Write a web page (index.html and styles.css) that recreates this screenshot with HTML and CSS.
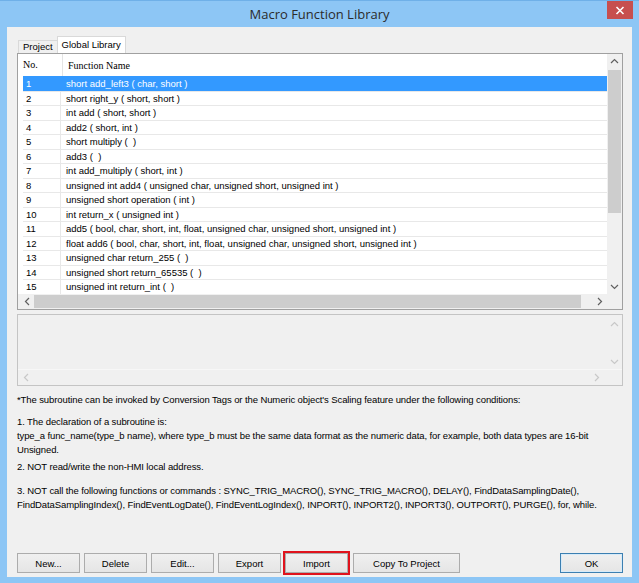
FILE: index.html
```html
<!DOCTYPE html>
<html lang="en">
<head>
  <meta charset="UTF-8" />
  <title>Macro Function Library</title>
  <link rel="stylesheet" href="styles.css">
</head>
<body>
  <div class="window">
    <div class="titlebar">
      <span class="title">Macro Function Library</span>
      <button class="close-btn">
        <svg width="10" height="9" viewBox="0 0 10 9"><path d="M1.5 1 L8.5 8 M8.5 1 L1.5 8" stroke="#fff" stroke-width="1.6" fill="none"/></svg>
      </button>
    </div>

    <div class="client">
      <div class="tabs">
        <div class="tab">Project</div>
        <div class="tab active">Global Library</div>
      </div>

      <div class="listview">
        <div class="lv-main">
          <div class="lv-body">
            <div class="lv-header">
              <div class="col-no">No.</div>
              <div class="col-name">Function Name</div>
            </div>
            <div class="lv-row selected"><div class="col-no">1</div><div class="col-name">short add_left3 ( char, short )</div></div>
            <div class="lv-row"><div class="col-no">2</div><div class="col-name">short right_y ( short, short )</div></div>
            <div class="lv-row"><div class="col-no">3</div><div class="col-name">int add ( short, short )</div></div>
            <div class="lv-row"><div class="col-no">4</div><div class="col-name">add2 ( short, int )</div></div>
            <div class="lv-row"><div class="col-no">5</div><div class="col-name">short multiply (&nbsp; )</div></div>
            <div class="lv-row"><div class="col-no">6</div><div class="col-name">add3 (&nbsp; )</div></div>
            <div class="lv-row"><div class="col-no">7</div><div class="col-name">int add_multiply ( short, int )</div></div>
            <div class="lv-row"><div class="col-no">8</div><div class="col-name">unsigned int add4 ( unsigned char, unsigned short, unsigned int )</div></div>
            <div class="lv-row"><div class="col-no">9</div><div class="col-name">unsigned short operation ( int )</div></div>
            <div class="lv-row"><div class="col-no">10</div><div class="col-name">int return_x ( unsigned int )</div></div>
            <div class="lv-row"><div class="col-no">11</div><div class="col-name">add5 ( bool, char, short, int, float, unsigned char, unsigned short, unsigned int )</div></div>
            <div class="lv-row"><div class="col-no">12</div><div class="col-name">float add6 ( bool, char, short, int, float, unsigned char, unsigned short, unsigned int )</div></div>
            <div class="lv-row"><div class="col-no">13</div><div class="col-name">unsigned char return_255 (&nbsp; )</div></div>
            <div class="lv-row"><div class="col-no">14</div><div class="col-name">unsigned short return_65535 (&nbsp; )</div></div>
            <div class="lv-row"><div class="col-no">15</div><div class="col-name">unsigned int return_int (&nbsp; )</div></div>
          </div>
          <div class="vscroll">
            <svg class="arrow" width="15" height="14" viewBox="0 0 15 14"><path d="M4 9 L7.5 5.5 L11 9" stroke="#606060" stroke-width="1.2" fill="none"/></svg>
            <div class="vthumb"></div>
            <div class="vspace"></div>
            <svg class="arrow" width="15" height="14" viewBox="0 0 15 14"><path d="M4 5 L7.5 8.5 L11 5" stroke="#606060" stroke-width="1.2" fill="none"/></svg>
          </div>
        </div>
        <div class="hscroll-row">
          <div class="hscroll">
            <svg class="arrow" width="14" height="15" viewBox="0 0 14 15"><path d="M9 4 L5.5 7.5 L9 11" stroke="#606060" stroke-width="1.2" fill="none"/></svg>
            <div class="hthumb"></div>
            <svg class="arrow" width="14" height="15" viewBox="0 0 14 15"><path d="M5 4 L8.5 7.5 L5 11" stroke="#606060" stroke-width="1.2" fill="none"/></svg>
          </div>
          <div class="corner"></div>
        </div>
      </div>

      <div class="descbox">
        <div class="desc-main">
          <div class="desc-text"></div>
          <div class="desc-vscroll">
            <svg width="15" height="14" viewBox="0 0 15 14"><path d="M4 9 L7.5 5.5 L11 9" stroke="#c8c8c8" stroke-width="1.2" fill="none"/></svg>
            <svg width="15" height="14" viewBox="0 0 15 14"><path d="M4 5 L7.5 8.5 L11 5" stroke="#c8c8c8" stroke-width="1.2" fill="none"/></svg>
          </div>
        </div>
        <div class="desc-hscroll">
          <svg width="14" height="15" viewBox="0 0 14 15"><path d="M9 4 L5.5 7.5 L9 11" stroke="#c8c8c8" stroke-width="1.2" fill="none"/></svg>
          <svg width="14" height="15" viewBox="0 0 14 15"><path d="M5 4 L8.5 7.5 L5 11" stroke="#c8c8c8" stroke-width="1.2" fill="none"/></svg>
        </div>
      </div>

      <div class="notes">
        <p class="intro">*The subroutine can be invoked by Conversion Tags or the Numeric object's Scaling feature under the following conditions:</p>
        <p class="rule-1">1. The declaration of a subroutine is:<br>type_a func_name(type_b name), where type_b must be the same data format as the numeric data, for example, both data types are 16-bit<br>Unsigned.</p>
        <p class="rule-2">2. NOT read/write the non-HMI local address.</p>
        <p>3. NOT call the following functions or commands : SYNC_TRIG_MACRO(), SYNC_TRIG_MACRO(), DELAY(), FindDataSamplingDate(),<br>FindDataSamplingIndex(), FindEventLogDate(), FindEventLogIndex(), INPORT(), INPORT2(), INPORT3(), OUTPORT(), PURGE(), for, while.</p>
      </div>

      <div class="buttons">
        <button class="btn">New...</button>
        <button class="btn">Delete</button>
        <button class="btn">Edit...</button>
        <button class="btn">Export</button>
        <button class="btn marked">Import</button>
        <button class="btn wide">Copy To Project</button>
        <button class="btn default">OK</button>
      </div>
    </div>
  </div>
</body>
</html>
```

FILE: styles.css
```css
body {
  margin: 0;
  padding: 0;
  background: #8dc6f5;
  font-family: "Liberation Sans", Arial, sans-serif;
  font-size: 9.5px;
  color: #000;
}

.window {
  width: 639px;
  height: 583px;
  display: flex;
  flex-direction: column;
  background: #8dc6f5;
  box-sizing: border-box;
  border-top: 1px solid #6fb0e8;
}

.titlebar {
  height: 26px;
  position: relative;
  display: flex;
  justify-content: center;
  align-items: center;
}

.title {
  font-family: "Open Sans", "Noto Sans", sans-serif;
  font-size: 13px;
  color: #2b2b2b;
  margin-top: -1px;
}

.close-btn {
  position: absolute;
  top: 0;
  right: 6px;
  width: 26px;
  height: 18px;
  border: none;
  padding: 0;
  background: #c74f4f;
  display: flex;
  justify-content: center;
  align-items: center;
}

.client {
  flex: 1;
  margin: 0 7px 6px 7px;
  background: #f0f0f0;
  padding: 0 9px 0 10px;
  display: flex;
  flex-direction: column;
}

/* tabs */
.tabs {
  display: flex;
  align-items: flex-end;
  margin-top: 9px;
  height: 17px;
  padding-left: 1px;
}

.tab {
  height: 12px;
  line-height: 12px;
  padding: 0 4px;
  border: 1px solid #d9d9d9;
  border-bottom: none;
  background: #f0f0f0;
  font-size: 9.5px;
}

.tab.active {
  height: 16px;
  line-height: 16px;
  background: #fff;
  padding: 0 4px;
  margin-left: -1px;
}

/* list view */
.listview {
  height: 257px;
  border: 1px solid #a0a0a0;
  box-sizing: border-box;
  background: #fff;
  display: flex;
  flex-direction: column;
}

.lv-main {
  flex: 1;
  display: flex;
  overflow: hidden;
}

.lv-body {
  flex: 1;
  overflow: hidden;
}

.lv-header {
  height: 22px;
  display: flex;
  align-items: center;
  font-family: "Liberation Serif", "Times New Roman", serif;
  font-size: 10px;
}

.lv-header .col-no {
  border-right: 1px solid #e4e4e4;
  height: 22px;
  line-height: 22px;
}

.col-no {
  width: 39px;
  padding-left: 5px;
  flex-shrink: 0;
}

.col-name {
  padding-left: 5px;
  white-space: nowrap;
}

.lv-row {
  height: 14.5px;
  line-height: 14px;
  display: flex;
  border-top: 1px solid #e8e8e8;
  box-sizing: border-box;
  margin-left: 5px;
}

.lv-row .col-no {
  width: 34px;
  padding-left: 3px;
  border-right: 1px solid #e8e8e8;
}

.lv-row.selected {
  background: #3399ff;
  color: #fff;
  border-top-color: #3399ff;
}

.lv-row.selected .col-no {
  border-right-color: #3399ff;
}

.vscroll {
  width: 15px;
  flex-shrink: 0;
  background: #f0f0f0;
  display: flex;
  flex-direction: column;
}

.vthumb {
  height: 143px;
  margin: 2px 1px 0 1px;
  background: #cdcdcd;
}

.vspace {
  flex: 1;
}

.hscroll-row {
  height: 15px;
  display: flex;
}

.hscroll {
  flex: 1;
  background: #f0f0f0;
  display: flex;
  align-items: center;
  padding-left: 2px;
}

.hthumb {
  width: 547px;
  height: 13px;
  background: #cdcdcd;
  margin-right: auto;
}

.corner {
  width: 15px;
  background: #f0f0f0;
}

/* description box */
.descbox {
  margin-top: 4px;
  height: 72px;
  border: 1px solid #c4c4c4;
  box-sizing: border-box;
  background: #f0f0f0;
  display: flex;
  flex-direction: column;
}

.desc-main {
  flex: 1;
  display: flex;
}

.desc-text {
  flex: 1;
}

.desc-vscroll {
  width: 15px;
  display: flex;
  flex-direction: column;
  justify-content: space-between;
  padding: 2px 0 0 0;
}

.desc-hscroll {
  height: 15px;
  display: flex;
  justify-content: space-between;
  padding: 0 18px 0 1px;
  border-top: 1px solid #f7f7f7;
}

/* notes */
.notes {
  margin-top: 7px;
  flex: 1;
  line-height: 14px;
  letter-spacing: -0.1px;
}

.notes p {
  margin: 0 0 10px 0;
}

.notes .intro {
  margin-bottom: 8px;
}

.notes .rule-1 {
  margin-bottom: 3px;
}

/* buttons */
.buttons {
  display: flex;
  gap: 4px;
  margin-bottom: 4px;
}

.btn {
  width: 63px;
  height: 20px;
  padding: 0;
  border: 1px solid #acacac;
  background: linear-gradient(#f0f0f0, #e5e5e5);
  font-family: "Liberation Sans", Arial, sans-serif;
  font-size: 9.5px;
  color: #000;
}

.btn.marked {
  outline: 2px solid #e0131d;
  outline-offset: 0;
}

.btn.wide {
  width: 107px;
  margin-left: 1px;
}

.btn.default {
  margin-left: auto;
  border-color: #3c7fb1;
  box-shadow: inset 0 0 0 1px #d7ebf9;
}
```
